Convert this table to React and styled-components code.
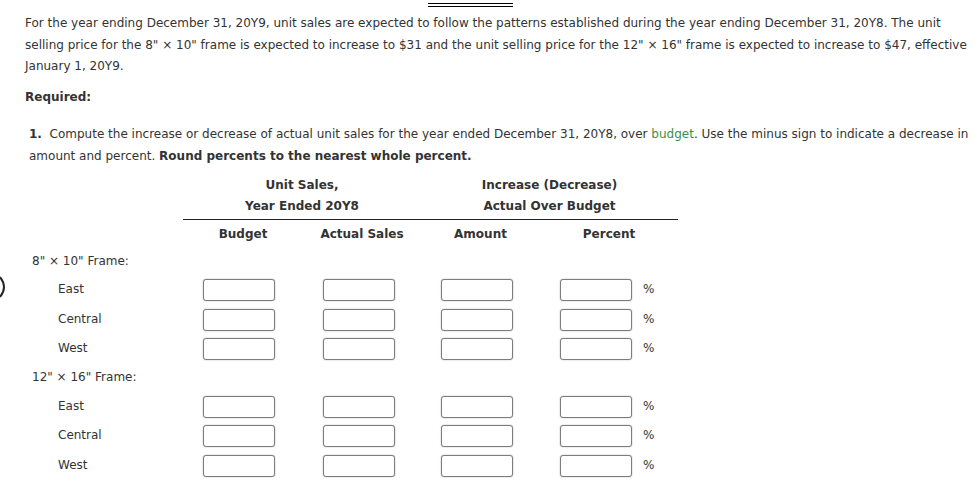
import React from "react";
import styled, { createGlobalStyle } from "styled-components";

const Global = createGlobalStyle`
  html, body { margin: 0; padding: 0; background: #fff; }
  body {
    font-family: "DejaVu Sans", Verdana, sans-serif;
    font-size: 12px;
    line-height: 1.8;
    color: #333;
  }
`;

const Page = styled.div`
  position: relative;
  padding: 0 8px 20px 25px;
`;

const TopRule = styled.div`
  width: 85px;
  height: 2px;
  margin: 3px 0 0 403px;
  border-top: 1px solid #000;
  border-bottom: 1px solid #000;
`;

const Para = styled.p`
  margin: ${(p) => p.$mt || 0}px 0 0 ${(p) => p.$ml || 0}px;
  white-space: nowrap;
`;

const Bold = styled.strong`
  font-weight: bold;
`;

const Link = styled.span`
  color: #3d8f45;
`;

const Edge = styled.svg`
  position: absolute;
  left: 0;
  top: 273px;
`;

const Table = styled.div`
  margin: 7px 0 0 0;
`;

const cols = "158px 120px 118px 119px 138px";

const GroupRow = styled.div`
  display: grid;
  grid-template-columns: 158px 238px 257px;
  font-weight: bold;
  text-align: center;
`;

const Rule = styled.div`
  margin: 1px 0 0 158px;
  width: 495px;
  border-top: 1px solid #222;
`;

const HeadRow = styled.div`
  display: grid;
  grid-template-columns: ${cols};
  font-weight: bold;
  text-align: center;
  margin: 4px 0 2px;
`;

const Row = styled.div`
  display: grid;
  grid-template-columns: ${cols};
  align-items: center;
  height: ${(p) => p.$h || 29.5}px;
`;

const Label = styled.div`
  padding-left: ${(p) => (p.$sub ? 33 : 7)}px;
`;

const Cell = styled.div`
  display: flex;
  align-items: center;
  padding-left: 20px;
  gap: 11px;
`;

const Input = styled.input`
  box-sizing: border-box;
  width: 72px;
  height: 22px;
  margin: 0;
  padding: 0 4px;
  border: 1px solid #7c7c7c;
  border-radius: 3px;
  box-shadow: 0 0 1.5px rgba(0, 0, 0, 0.35);
  background: #fff;
  font: inherit;
`;

const Pct = styled.span`
  color: #333;
`;

const sections = [
  { title: "8\" × 10\" Frame:", rows: ["East", "Central", "West"] },
  { title: "12\" × 16\" Frame:", rows: ["East", "Central", "West"] },
];

export default function App() {
  return (
    <>
      <Global />
      <Page>
        <Edge width="5" height="22" viewBox="0 0 5 22">
          <path d="M0 1 Q4 6 4 11 Q4 16 0 21" fill="none" stroke="#222" strokeWidth="2" />
        </Edge>
        <TopRule />
        <Para $mt={6}>
          For the year ending December 31, 20Y9, unit sales are expected to follow the patterns established during the year ending December 31, 20Y8. The unit
          <br />
          selling price for the 8" × 10" frame is expected to increase to $31 and the unit selling price for the 12" × 16" frame is expected to increase to $47, effective
          <br />
          January 1, 20Y9.
        </Para>
        <Para $mt={9}>
          <Bold>Required:</Bold>
        </Para>
        <Para $mt={16} $ml={4}>
          <Bold>1.</Bold>&nbsp; Compute the increase or decrease of actual unit sales for the year ended December 31, 20Y8, over <Link>budget</Link>. Use the minus sign to indicate a decrease in
          <br />
          amount and percent. <Bold>Round percents to the nearest whole percent.</Bold>
        </Para>
        <Table>
          <GroupRow>
            <div />
            <div>
              Unit Sales,
              <br />
              Year Ended 20Y8
            </div>
            <div>
              Increase (Decrease)
              <br />
              Actual Over Budget
            </div>
          </GroupRow>
          <Rule />
          <HeadRow>
            <div />
            <div>Budget</div>
            <div>Actual Sales</div>
            <div>Amount</div>
            <div>Percent</div>
          </HeadRow>
          {sections.map((s) => (
            <React.Fragment key={s.title}>
              <Row $h={28}>
                <Label>{s.title}</Label>
              </Row>
              {s.rows.map((r) => (
                <Row key={r}>
                  <Label $sub>{r}</Label>
                  <Cell><Input /></Cell>
                  <Cell><Input /></Cell>
                  <Cell><Input /></Cell>
                  <Cell>
                    <Input />
                    <Pct>%</Pct>
                  </Cell>
                </Row>
              ))}
            </React.Fragment>
          ))}
        </Table>
      </Page>
    </>
  );
}
